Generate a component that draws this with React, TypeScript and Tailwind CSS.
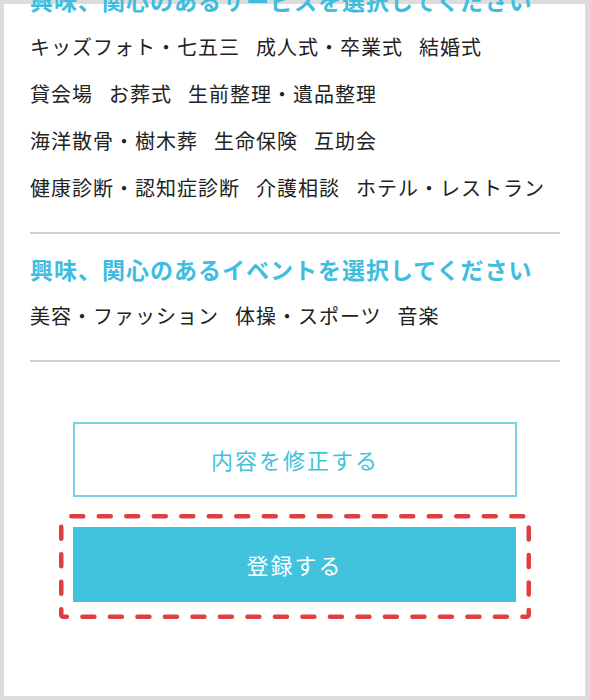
import { useState } from 'react'

const serviceRows = [
  ['キッズフォト・七五三', '成人式・卒業式', '結婚式'],
  ['貸会場', 'お葬式', '生前整理・遺品整理'],
  ['海洋散骨・樹木葬', '生命保険', '互助会'],
  ['健康診断・認知症診断', '介護相談', 'ホテル・レストラン'],
]

const eventRows = [['美容・ファッション', '体操・スポーツ', '音楽']]

const font = "font-['Noto_Sans_CJK_JP','Noto_Sans',sans-serif]"

function Section({
  title,
  rows,
  first = false,
}: {
  title: string
  rows: string[][]
  first?: boolean
}) {
  return (
    <section className={first ? 'mt-[-22px]' : 'pt-[17px]'}>
      <h3 className="text-[23px] leading-[36px] font-semibold tracking-[1px] text-[#3fbde0] mb-[5px]">
        {title}
      </h3>
      <ul className="pb-[21px] border-b-2 border-[#d0d0d0]">
        {rows.map((row, i) => (
          <li key={i} className="flex gap-x-4 text-[20px] leading-[47px] tracking-[1px] text-[#222]">
            {row.map((item) => (
              <span key={item}>{item}</span>
            ))}
          </li>
        ))}
      </ul>
    </section>
  )
}

export default function App() {
  const [submitted, setSubmitted] = useState(false)

  return (
    <div className={`${font} w-[590px] h-[700px] bg-[#dcdcdc] pl-[4px] pr-[5px] pt-[4px] pb-[4px] overflow-hidden`}>
      <div className="flex flex-col h-full bg-white pl-[26px] pr-[25px]">
        <Section title="興味、関心のあるサービスを選択してください" rows={serviceRows} first />
        <Section title="興味、関心のあるイベントを選択してください" rows={eventRows} />

        <div className="mt-[60px] mx-[43px]">
          <button className="w-full h-[75px] border-2 border-[#7ad2e8] bg-white text-[22px] tracking-[2px] text-[#41c3de]">
            内容を修正する
          </button>
        </div>

        <div className="relative mt-[17px] mx-[29px] pl-[14px] pr-[15px] pt-[13px] pb-[17px]">
          <svg
            className="absolute inset-0 pointer-events-none"
            width="472"
            height="105"
            viewBox="0 0 472 105"
          >
            <rect
              x="2.25"
              y="2.25"
              width="467.5"
              height="100.5"
              rx="2"
              fill="none"
              stroke="#de3f40"
              strokeWidth="4.5"
              strokeLinecap="round"
              strokeDasharray="12 15.5"
              strokeDashoffset="-8"
            />
          </svg>
          <button
            onClick={() => setSubmitted(true)}
            className="relative w-full h-[75px] bg-[#41c3de] text-white text-[22px] tracking-[2px]"
          >
            {submitted ? '登録する' : '登録する'}
          </button>
        </div>
      </div>
    </div>
  )
}
